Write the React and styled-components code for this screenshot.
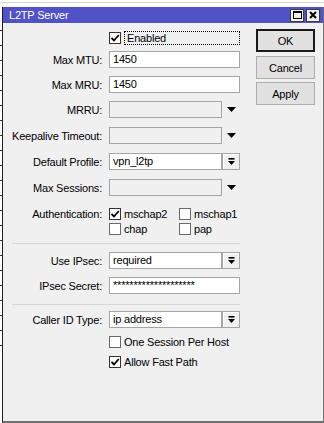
import styled, { createGlobalStyle } from "styled-components";

const GlobalStyle = createGlobalStyle`
  html, body {
    margin: 0;
    padding: 0;
  }
  body {
    width: 324px;
    height: 423px;
    overflow: hidden;
    background-color: #fff;
    background-image:
      repeating-linear-gradient(to bottom, transparent 0 14px, #3a3a3a 14px 15px),
      linear-gradient(#d6d6d6, #d6d6d6);
    background-size: 2px 330px, 100% 1px;
    background-position: 0 16px, 0 2px;
    background-repeat: no-repeat;
    font-family: "Liberation Sans", Arial, sans-serif;
    color: #000;
  }
`;

const Page = styled.div`
  padding: 7px 0 0 2px;
`;

const Window = styled.div`
  box-sizing: border-box;
  width: 322px;
  height: 416px;
  background: #f0f0f0;
  border-left: 1px solid #1e1e1e;
  border-right: 1px solid #707070;
  border-bottom: 2px solid #707070;
  display: flex;
  flex-direction: column;
`;

const TitleBar = styled.div`
  height: 16px;
  background: #5052c6;
  display: flex;
  align-items: center;
  justify-content: space-between;
  padding: 0 3px 0 6px;
`;

const Title = styled.span`
  color: #fff;
  font-size: 11px;
  letter-spacing: -0.2px;
`;

const TitleButtons = styled.div`
  display: flex;
  gap: 2px;
`;

const TitleButton = styled.div`
  box-sizing: border-box;
  width: 14px;
  height: 13px;
  background: #f0f0f0;
  border: 1px solid #3c3c3c;
  display: flex;
  align-items: center;
  justify-content: center;
`;

const Content = styled.div`
  display: flex;
  align-items: flex-start;
`;

const Form = styled.div`
  display: flex;
  flex-direction: column;
  padding-top: 8px;
`;

const Row = styled.div`
  display: grid;
  grid-template-columns: 99px 131px;
  column-gap: 7px;
  align-items: center;
  height: ${(p) => p.$h || 17}px;
  margin-top: ${(p) => p.$mt || 0}px;
`;

const Label = styled.div`
  text-align: right;
  font-size: 11px;
  letter-spacing: -0.2px;
  white-space: nowrap;
`;

const Field = styled.div`
  display: flex;
  align-items: center;
`;

const Input = styled.div`
  box-sizing: border-box;
  width: ${(p) => p.$w || 131}px;
  height: 17px;
  background: ${(p) => (p.$disabled ? "#f0f0f0" : "#fff")};
  border: 1px solid #a5a5a5;
  padding-left: 3px;
  font-size: 11px;
  line-height: 15px;
  letter-spacing: -0.2px;
  white-space: nowrap;
  overflow: hidden;
`;

const DropButton = styled.div`
  box-sizing: border-box;
  width: 18px;
  height: 17px;
  background: #f0f0f0;
  border: 1px solid #a5a5a5;
  box-shadow: inset 1px 1px 0 #fff;
  display: flex;
  align-items: center;
  justify-content: center;
`;

const Arrow = styled.svg`
  margin-left: 5px;
`;

const Checks = styled.div`
  display: flex;
  align-items: center;
`;

const CheckItem = styled.div`
  display: flex;
  align-items: center;
  gap: 3px;
  width: ${(p) => (p.$w ? `${p.$w}px` : "auto")};
  font-size: 11px;
  letter-spacing: -0.2px;
  white-space: nowrap;
`;

const Box = styled.div`
  box-sizing: border-box;
  width: 12px;
  height: 12px;
  flex: none;
  background: #fff;
  border: 1px solid ${(p) => (p.$checked ? "#333" : "#6a6a6a")};
  display: flex;
  align-items: center;
  justify-content: center;
`;

const Focus = styled.span`
  box-sizing: border-box;
  width: 118px;
  height: 14px;
  border: 1px dotted #000;
  padding-left: 2px;
  line-height: 12px;
`;

const Separator = styled.div`
  width: 228px;
  height: 1px;
  margin: ${(p) => p.$mt}px 0 0 9px;
  background: #d7d7d7;
`;

const Buttons = styled.div`
  display: flex;
  flex-direction: column;
  gap: 3px;
  margin-left: 16px;
  padding-top: 6px;
`;

const Button = styled.div`
  box-sizing: border-box;
  width: 59px;
  height: 23px;
  background: #e1e1e1;
  border: ${(p) => (p.$primary ? "2px solid #1a1a1a" : "1px solid #adadad")};
  margin-bottom: ${(p) => (p.$primary ? 1 : 0)}px;
  display: flex;
  align-items: center;
  justify-content: center;
  font-size: 11px;
  letter-spacing: -0.2px;
`;

const CheckMark = () => (
  <svg width="10" height="10" viewBox="0 0 10 10">
    <path d="M1.5 5 L4 7.5 L8.8 2" fill="none" stroke="#000" strokeWidth="1.8" />
  </svg>
);

const Checkbox = ({ checked }) => (
  <Box $checked={checked}>{checked && <CheckMark />}</Box>
);

const Check = ({ checked, label, w }) => (
  <CheckItem $w={w}>
    <Checkbox checked={checked} />
    {label}
  </CheckItem>
);

const ComboIcon = () => (
  <svg width="7" height="8" viewBox="0 0 7 8">
    <rect x="0.5" y="0" width="6" height="1.6" fill="#000" />
    <polygon points="0,3 7,3 3.5,7" fill="#000" />
  </svg>
);

const DownArrow = () => (
  <Arrow width="9" height="5" viewBox="0 0 9 5">
    <polygon points="0,0 9,0 4.5,5" fill="#000" />
  </Arrow>
);

const TextRow = ({ label, value, mt }) => (
  <Row $mt={mt}>
    <Label>{label}</Label>
    <Field>
      <Input>{value}</Input>
    </Field>
  </Row>
);

const ComboRow = ({ label, value, mt }) => (
  <Row $mt={mt}>
    <Label>{label}</Label>
    <Field>
      <Input $w={113}>{value}</Input>
      <DropButton>
        <ComboIcon />
      </DropButton>
    </Field>
  </Row>
);

const EmptyRow = ({ label, mt }) => (
  <Row $mt={mt}>
    <Label>{label}</Label>
    <Field>
      <Input $w={113} $disabled />
      <DownArrow />
    </Field>
  </Row>
);

export default function App() {
  return (
    <>
      <GlobalStyle />
      <Page>
        <Window>
          <TitleBar>
            <Title>L2TP Server</Title>
            <TitleButtons>
              <TitleButton>
                <svg width="9" height="8" viewBox="0 0 9 8">
                  <rect x="0.5" y="0.5" width="8" height="7" fill="none" stroke="#000" />
                  <rect x="0" y="0" width="9" height="2" fill="#000" />
                </svg>
              </TitleButton>
              <TitleButton>
                <svg width="8" height="8" viewBox="0 0 8 8">
                  <path d="M1 1 L7 7 M7 1 L1 7" stroke="#000" strokeWidth="2" />
                </svg>
              </TitleButton>
            </TitleButtons>
          </TitleBar>

          <Content>
            <Form>
              <Row $h={14}>
                <Label />
                <CheckItem>
                  <Checkbox checked />
                  <Focus>Enabled</Focus>
                </CheckItem>
              </Row>
              <TextRow label="Max MTU:" value="1450" mt={6} />
              <TextRow label="Max MRU:" value="1450" mt={8} />
              <EmptyRow label="MRRU:" mt={8} />
              <EmptyRow label="Keepalive Timeout:" mt={9} />
              <ComboRow label="Default Profile:" value="vpn_l2tp" mt={9} />
              <EmptyRow label="Max Sessions:" mt={9} />

              <Row $h={12} $mt={12}>
                <Label>Authentication:</Label>
                <Checks>
                  <Check checked label="mschap2" w={70} />
                  <Check label="mschap1" />
                </Checks>
              </Row>
              <Row $h={12} $mt={3}>
                <Label />
                <Checks>
                  <Check label="chap" w={70} />
                  <Check label="pap" />
                </Checks>
              </Row>

              <Separator $mt={8} />
              <ComboRow label="Use IPsec:" value="required" mt={8} />
              <TextRow label="IPsec Secret:" value="********************" mt={8} />

              <Separator $mt={10} />
              <ComboRow label="Caller ID Type:" value="ip address" mt={6} />
              <Row $h={12} $mt={8}>
                <Label />
                <Check label="One Session Per Host" />
              </Row>
              <Row $h={12} $mt={8}>
                <Label />
                <Check checked label="Allow Fast Path" />
              </Row>
            </Form>

            <Buttons>
              <Button $primary>OK</Button>
              <Button>Cancel</Button>
              <Button>Apply</Button>
            </Buttons>
          </Content>
        </Window>
      </Page>
    </>
  );
}
